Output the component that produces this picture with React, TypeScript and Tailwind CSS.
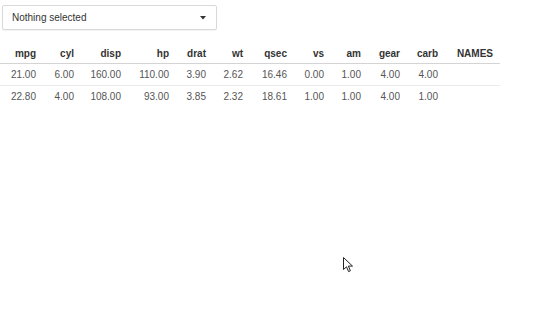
import React from "react";

const cols = [
  { name: "mpg", w: 44 },
  { name: "cyl", w: 38 },
  { name: "disp", w: 47 },
  { name: "hp", w: 48 },
  { name: "drat", w: 37 },
  { name: "wt", w: 37 },
  { name: "qsec", w: 44 },
  { name: "vs", w: 37 },
  { name: "am", w: 37 },
  { name: "gear", w: 39 },
  { name: "carb", w: 38 },
];

const rows = [
  ["21.00", "6.00", "160.00", "110.00", "3.90", "2.62", "16.46", "0.00", "1.00", "4.00", "4.00"],
  ["22.80", "4.00", "108.00", "93.00", "3.85", "2.32", "18.61", "1.00", "1.00", "4.00", "1.00"],
];

export default function App() {
  return (
    <div
      className="relative w-[540px] h-[335px] bg-white overflow-hidden"
      style={{ fontFamily: '"Liberation Sans", Arial, sans-serif' }}
    >
      <div className="pt-[5px] pl-[2px]">
        <div className="w-[215px] h-[25px] border border-[#d9d9d9] rounded-[2px] bg-white flex items-center justify-between pl-[9px] pr-[10px] shadow-[0_1px_1px_rgba(0,0,0,0.05)]">
          <span className="text-[10px] text-[#333]">Nothing selected</span>
          <svg width="6" height="4" viewBox="0 0 6 4">
            <path d="M0 0 L6 0 L3 3.5 Z" fill="#333" />
          </svg>
        </div>
      </div>
      <table className="mt-[12px] border-collapse table-fixed w-[500px] text-[10px]">
        <colgroup>
          {cols.map((c) => (
            <col key={c.name} style={{ width: c.w }} />
          ))}
          <col style={{ width: 54 }} />
        </colgroup>
        <thead>
          <tr className="h-[21px] border-b border-[#d4d4d4]">
            {cols.map((c) => (
              <th key={c.name} className="text-right pr-[8px] font-bold text-[#333] leading-[12px] pt-[3px]">
                {c.name}
              </th>
            ))}
            <th className="text-right pr-[7px] font-bold text-[#333] leading-[12px] pt-[3px]">NAMES</th>
          </tr>
        </thead>
        <tbody>
          {rows.map((r, i) => (
            <tr key={i} className={`h-[22px] ${i === 0 ? "border-b border-[#ececec]" : ""}`}>
              {r.map((v, j) => (
                <td key={j} className="text-right pr-[8px] text-[#555] leading-[12px] pt-[1px]">
                  {v}
                </td>
              ))}
              <td />
            </tr>
          ))}
        </tbody>
      </table>
      <svg className="absolute left-[343px] top-[257px]" width="11" height="16" viewBox="0 0 11 16">
        <path
          d="M0.5 0.5 L0.5 12.5 L3.5 9.8 L5.6 14.6 L7.4 13.8 L5.4 9.1 L9.5 9.1 Z"
          fill="#fff"
          stroke="#222"
          strokeWidth="1"
          strokeLinejoin="round"
        />
      </svg>
    </div>
  );
}
